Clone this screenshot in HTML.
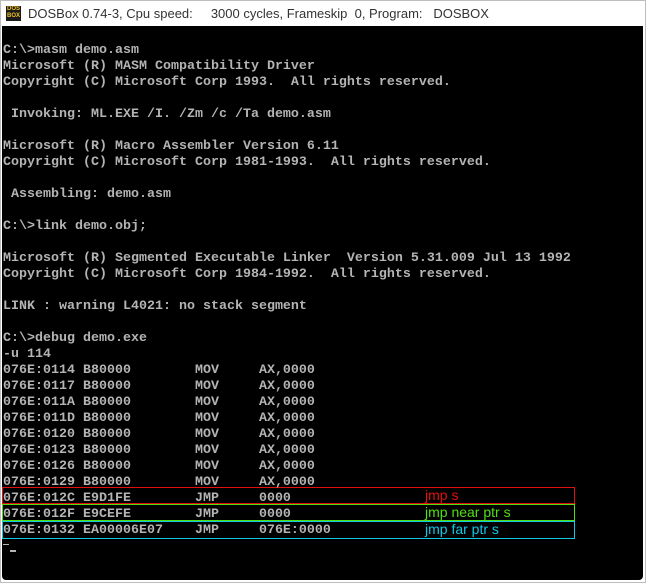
<!DOCTYPE html>
<html><head><meta charset="utf-8"><style>
html,body{margin:0;padding:0;background:#fff;width:646px;height:583px;overflow:hidden}
.win{position:absolute;left:0;top:0;width:644px;height:581px;border:1px solid #bdbdbd;background:#fff}
.title{position:absolute;left:27px;top:5px;font:13px "Liberation Sans",sans-serif;color:#333;white-space:pre}
.icon{position:absolute;left:5px;top:5px;width:15px;height:15px;background:#1a1a1a;color:#f0c020;font:bold 6px/7px "Liberation Sans",sans-serif;text-align:center;overflow:hidden}
.con{position:absolute;left:2px;top:26px;width:641px;height:554px;background:#000;border-radius:0 0 4px 4px}
pre{position:absolute;left:3px;top:43px;margin:0;font:13.333px/16px "Liberation Mono",monospace;color:#b4b4b4;font-weight:bold}
.box{position:absolute;left:2px;width:571px;border:1px solid}
.ann{position:absolute;left:425px;font:14px "Liberation Sans",sans-serif}
.cur{position:absolute;height:2px;background:#b4b4b4}
</style></head><body>
<div class="win">
<div class="icon">DOS<br>BOX</div>
<div class="title">DOSBox 0.74-3, Cpu speed:     3000 cycles, Frameskip  0, Program:   DOSBOX</div>
</div>
<div class="con"></div>
<div class="box" style="top:487px;height:15px;border-color:#e01010"></div>
<div class="box" style="top:504px;height:15px;border-color:#50e010"></div>
<div class="box" style="top:521px;height:16px;border-color:#10c8e8"></div>
<div class="ann" style="top:487px;color:#e01010">jmp s</div>
<div class="ann" style="top:504px;color:#50e010">jmp near ptr s</div>
<div class="ann" style="top:521px;color:#10c8e8">jmp far ptr s</div>
<pre>C:\&gt;masm demo.asm
Microsoft (R) MASM Compatibility Driver
Copyright (C) Microsoft Corp 1993.  All rights reserved.

 Invoking: ML.EXE /I. /Zm /c /Ta demo.asm

Microsoft (R) Macro Assembler Version 6.11
Copyright (C) Microsoft Corp 1981-1993.  All rights reserved.

 Assembling: demo.asm

C:\&gt;link demo.obj;

Microsoft (R) Segmented Executable Linker  Version 5.31.009 Jul 13 1992
Copyright (C) Microsoft Corp 1984-1992.  All rights reserved.

LINK : warning L4021: no stack segment

C:\&gt;debug demo.exe
-u 114
076E:0114 B80000        MOV     AX,0000
076E:0117 B80000        MOV     AX,0000
076E:011A B80000        MOV     AX,0000
076E:011D B80000        MOV     AX,0000
076E:0120 B80000        MOV     AX,0000
076E:0123 B80000        MOV     AX,0000
076E:0126 B80000        MOV     AX,0000
076E:0129 B80000        MOV     AX,0000
076E:012C E9D1FE        JMP     0000
076E:012F E9CEFE        JMP     0000
076E:0132 EA00006E07    JMP     076E:0000</pre>
<div class="cur" style="left:3px;top:544px;width:6px;height:1px"></div>
<div class="cur" style="left:10px;top:550px;width:6px"></div>
</body></html>
